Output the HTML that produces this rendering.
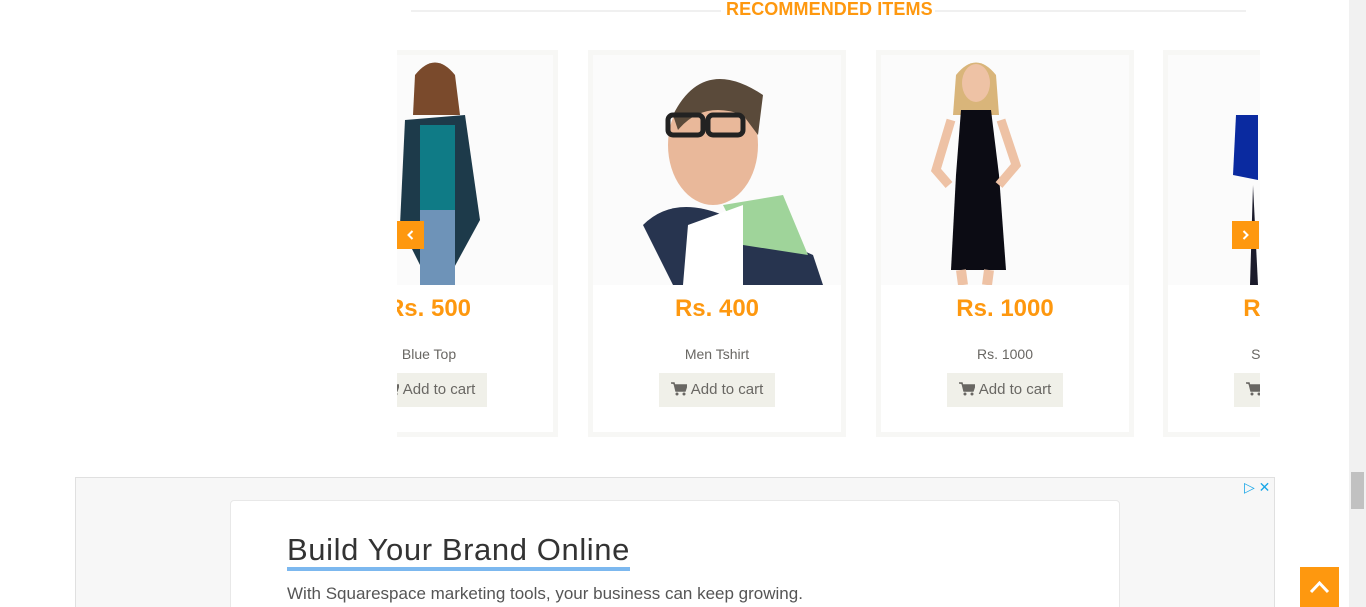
<!DOCTYPE html>
<html style="overflow:hidden;height:607px"><head><style>
body{margin:0;width:1366px;height:607px;overflow:hidden;background:#fff;font-family:"Liberation Sans",sans-serif;position:relative}
.line{position:absolute;top:10px;height:2px;background:#f0f0f0}
.title{position:absolute;left:726px;top:0;color:#fe980f;font-weight:bold;font-size:18px;line-height:18px;letter-spacing:0.1px}
.vp{position:absolute;left:397px;top:50px;width:863px;height:388px;overflow:hidden}
.card{position:absolute;top:0;width:248px;height:377px;border:5px solid #f7f7f5;background:#fff}
.img{position:absolute;left:0;top:0;width:248px;height:230px;background:#fbfbfb;overflow:hidden}
.price{position:absolute;top:240px;width:100%;text-align:center;color:#fe980f;font-weight:bold;font-size:24px}
.name{position:absolute;top:291px;width:100%;text-align:center;color:#696763;font-size:14px}
.btn{position:absolute;top:318px;left:66px;width:116px;height:34px;background:#f0f0e9;color:#696763;font-size:15px;line-height:34px;text-align:center}
.btn svg{vertical-align:-2px;margin-right:4px}
.arr{position:absolute;top:221px;width:27px;height:28px;background:#fe980f}
.sb{position:absolute;right:0;top:0;width:17px;height:607px;background:#f1f1f1}
</style></head><body>
<div class="line" style="left:411px;width:310px"></div>
<div class="line" style="left:935px;width:311px"></div>
<div class="title">RECOMMENDED ITEMS</div>
<div class="vp">
 <div class="card" style="left:-97px"><div class="img">
  <svg width="248" height="230"><ellipse cx="130" cy="30" rx="17" ry="22" fill="#e8b899"/><path d="M110 20 Q130 -5 150 20 L155 60 L108 60Z" fill="#7a4a2c"/><path d="M100 65 L160 60 L175 165 L145 220 L120 220 L95 170Z" fill="#1d3a4a"/><rect x="115" y="70" width="35" height="85" fill="#0f7b86"/><rect x="115" y="155" width="35" height="75" fill="#6e93b8"/></svg>
 </div><div class="price">Rs. 500</div><div class="name">Blue Top</div><div class="btn"><svg width="16" height="14" viewBox="0 0 16 14"><path d="M0 1h3l2 8h9l2-6H4" fill="#696763" stroke="#696763" stroke-width="1.5"/><circle cx="6" cy="12" r="1.5" fill="#696763"/><circle cx="13" cy="12" r="1.5" fill="#696763"/></svg>Add to cart</div></div>
 <div class="card" style="left:191px"><div class="img">
  <svg width="248" height="230"><path d="M50 170 Q80 140 130 160 L220 200 L230 230 L80 230Z" fill="#27344f"/><path d="M130 150 L190 140 L215 200 L150 190Z" fill="#9fd49a"/><path d="M95 170 L150 150 L150 230 L90 230Z" fill="#fff"/><ellipse cx="120" cy="90" rx="45" ry="60" fill="#e9b89a"/><path d="M80 60 Q110 0 170 40 L165 80 L150 60 Q110 45 85 75Z" fill="#5a4a3a"/><rect x="75" y="60" width="35" height="20" rx="5" fill="none" stroke="#222" stroke-width="5"/><rect x="115" y="60" width="35" height="20" rx="5" fill="none" stroke="#222" stroke-width="5"/></svg>
 </div><div class="price">Rs. 400</div><div class="name">Men Tshirt</div><div class="btn"><svg width="16" height="14" viewBox="0 0 16 14"><path d="M0 1h3l2 8h9l2-6H4" fill="#696763" stroke="#696763" stroke-width="1.5"/><circle cx="6" cy="12" r="1.5" fill="#696763"/><circle cx="13" cy="12" r="1.5" fill="#696763"/></svg>Add to cart</div></div>
 <div class="card" style="left:479px"><div class="img">
  <svg width="248" height="230"><path d="M75 20 Q95 -5 115 20 L118 60 L72 60Z" fill="#d9b57a"/><ellipse cx="95" cy="28" rx="14" ry="19" fill="#eec2a5"/><path d="M80 55 L110 55 L118 120 L125 215 L70 215 L75 120Z" fill="#0c0c14"/><path d="M70 65 L55 115 L68 130 M120 65 L135 110 L118 130" stroke="#eec2a5" stroke-width="9" fill="none"/><path d="M80 215 L82 230 M108 215 L106 230" stroke="#eec2a5" stroke-width="10"/></svg>
 </div><div class="price">Rs. 1000</div><div class="name">Rs. 1000</div><div class="btn"><svg width="16" height="14" viewBox="0 0 16 14"><path d="M0 1h3l2 8h9l2-6H4" fill="#696763" stroke="#696763" stroke-width="1.5"/><circle cx="6" cy="12" r="1.5" fill="#696763"/><circle cx="13" cy="12" r="1.5" fill="#696763"/></svg>Add to cart</div></div>
 <div class="card" style="left:766px"><div class="img">
  <svg width="248" height="230"><path d="M68 60 L90 60 L90 125 L65 120Z" fill="#0a2aa0"/><path d="M85 130 L90 230 L82 230Z" fill="#1a1a2a"/></svg>
 </div><div class="price">Rs. 1000</div><div class="name">Stylish Dress</div><div class="btn"><svg width="16" height="14" viewBox="0 0 16 14"><path d="M0 1h3l2 8h9l2-6H4" fill="#696763" stroke="#696763" stroke-width="1.5"/><circle cx="6" cy="12" r="1.5" fill="#696763"/><circle cx="13" cy="12" r="1.5" fill="#696763"/></svg>Add to cart</div></div>
</div>
<div class="arr" style="left:397px"><svg width="27" height="28"><path d="M15.5 10 L11.5 14 L15.5 18" stroke="#fff" stroke-width="2" fill="none"/></svg></div>
<div class="arr" style="left:1232px"><svg width="27" height="28"><path d="M11.5 10 L15.5 14 L11.5 18" stroke="#fff" stroke-width="2" fill="none"/></svg></div>
<div style="position:absolute;left:75px;top:477px;width:1198px;height:140px;border:1px solid #e0e0e0;background:#f7f7f7">
 <div style="position:absolute;left:1168px;top:1px;color:#1aa7e8;font-size:14px">▷ ✕</div>
 <div style="position:absolute;left:154px;top:22px;width:888px;height:130px;background:#fff;border:1px solid #e8e8e8;border-radius:4px">
  <div style="position:absolute;left:56px;top:32px;font-size:31px;color:#333;border-bottom:4px solid #7cb8ef;line-height:34px;letter-spacing:0.6px">Build Your Brand Online</div>
  <div style="position:absolute;left:56px;top:83px;font-size:17px;color:#555">With Squarespace marketing tools, your business can keep growing.</div>
 </div>
</div>
<div style="position:absolute;left:1300px;top:567px;width:39px;height:40px;background:#fe980f">
 <svg width="39" height="40"><path d="M11 25 L19.5 16 L28 25" stroke="#fff" stroke-width="3" fill="none"/></svg></div>
<div class="sb"><div style="position:absolute;left:2px;top:472px;width:13px;height:37px;background:#c1c1c1"></div></div>
</body></html>
